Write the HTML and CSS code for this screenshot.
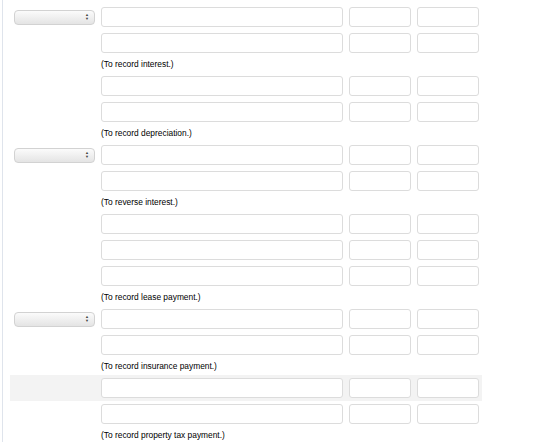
FILE: index.html
```html
<!DOCTYPE html>
<html lang="en">
<head>
  <meta charset="UTF-8" />
  <title>Journal Entries</title>
  <link rel="stylesheet" href="styles.css">
</head>
<body>
  <div class="sheet">
    <div class="journal">

      <!-- Entry: interest -->
      <div class="entry-row">
        <div class="date-cell"><div class="date-select"><span class="arrows">&#9650;<br>&#9660;</span></div></div>
        <div class="cell"><div class="field"></div></div>
        <div class="cell"><div class="field"></div></div>
        <div class="cell"><div class="field"></div></div>
      </div>
      <div class="entry-row">
        <div class="date-cell"></div>
        <div class="cell"><div class="field"></div></div>
        <div class="cell"><div class="field"></div></div>
        <div class="cell"><div class="field"></div></div>
      </div>
      <div class="memo">(To record interest.)</div>

      <!-- Entry: depreciation -->
      <div class="entry-row">
        <div class="date-cell"></div>
        <div class="cell"><div class="field"></div></div>
        <div class="cell"><div class="field"></div></div>
        <div class="cell"><div class="field"></div></div>
      </div>
      <div class="entry-row">
        <div class="date-cell"></div>
        <div class="cell"><div class="field"></div></div>
        <div class="cell"><div class="field"></div></div>
        <div class="cell"><div class="field"></div></div>
      </div>
      <div class="memo">(To record depreciation.)</div>

      <!-- Entry: reverse interest -->
      <div class="entry-row">
        <div class="date-cell"><div class="date-select"><span class="arrows">&#9650;<br>&#9660;</span></div></div>
        <div class="cell"><div class="field"></div></div>
        <div class="cell"><div class="field"></div></div>
        <div class="cell"><div class="field"></div></div>
      </div>
      <div class="entry-row">
        <div class="date-cell"></div>
        <div class="cell"><div class="field"></div></div>
        <div class="cell"><div class="field"></div></div>
        <div class="cell"><div class="field"></div></div>
      </div>
      <div class="memo">(To reverse interest.)</div>

      <!-- Entry: lease payment -->
      <div class="entry-row">
        <div class="date-cell"></div>
        <div class="cell"><div class="field"></div></div>
        <div class="cell"><div class="field"></div></div>
        <div class="cell"><div class="field"></div></div>
      </div>
      <div class="entry-row">
        <div class="date-cell"></div>
        <div class="cell"><div class="field"></div></div>
        <div class="cell"><div class="field"></div></div>
        <div class="cell"><div class="field"></div></div>
      </div>
      <div class="entry-row">
        <div class="date-cell"></div>
        <div class="cell"><div class="field"></div></div>
        <div class="cell"><div class="field"></div></div>
        <div class="cell"><div class="field"></div></div>
      </div>
      <div class="memo">(To record lease payment.)</div>

      <!-- Entry: insurance payment -->
      <div class="entry-row">
        <div class="date-cell"><div class="date-select"><span class="arrows">&#9650;<br>&#9660;</span></div></div>
        <div class="cell"><div class="field"></div></div>
        <div class="cell"><div class="field"></div></div>
        <div class="cell"><div class="field"></div></div>
      </div>
      <div class="entry-row">
        <div class="date-cell"></div>
        <div class="cell"><div class="field"></div></div>
        <div class="cell"><div class="field"></div></div>
        <div class="cell"><div class="field"></div></div>
      </div>
      <div class="memo">(To record insurance payment.)</div>

      <!-- Entry: property tax payment -->
      <div class="entry-row hover">
        <div class="date-cell"></div>
        <div class="cell"><div class="field"></div></div>
        <div class="cell"><div class="field"></div></div>
        <div class="cell"><div class="field"></div></div>
      </div>
      <div class="entry-row">
        <div class="date-cell"></div>
        <div class="cell"><div class="field"></div></div>
        <div class="cell"><div class="field"></div></div>
        <div class="cell"><div class="field"></div></div>
      </div>
      <div class="memo">(To record property tax payment.)</div>

    </div>
  </div>
</body>
</html>
```

FILE: styles.css
```css
body {
  margin: 0;
  padding: 0;
  background: #ffffff;
  font-family: "Liberation Sans", Arial, sans-serif;
  height: 100vh;
  overflow: hidden;
}

.sheet {
  margin-left: 2px;
  width: 556px;
  height: 100vh;
  border-left: 1px solid #dfe4ec;
  border-right: 1px solid #dfe4ec;
  padding: 4px 0 0 7px;
  box-sizing: content-box;
}

.journal {
  width: 472px;
}

.entry-row {
  display: grid;
  grid-template-columns: 88px 248px 68px 68px;
  height: 26px;
  align-items: center;
}

.entry-row.hover {
  background: #f3f3f3;
}

.date-cell {
  padding-left: 4px;
}

.date-select {
  width: 81px;
  height: 15px;
  box-sizing: border-box;
  border: 1px solid #d2d2d2;
  border-radius: 4px;
  background: linear-gradient(#fbfbfb, #e4e4e4);
  position: relative;
}

.arrows {
  position: absolute;
  right: 5px;
  top: 2px;
  font-size: 4px;
  line-height: 4px;
  color: #444;
}

.cell {
  padding: 0 3px;
}

.field {
  height: 20px;
  box-sizing: border-box;
  border: 1px solid #dcdcdc;
  border-radius: 3px;
  background: #ffffff;
}

.memo {
  height: 17px;
  line-height: 17px;
  padding-left: 91px;
  font-size: 8.4px;
  color: #000;
}
```
